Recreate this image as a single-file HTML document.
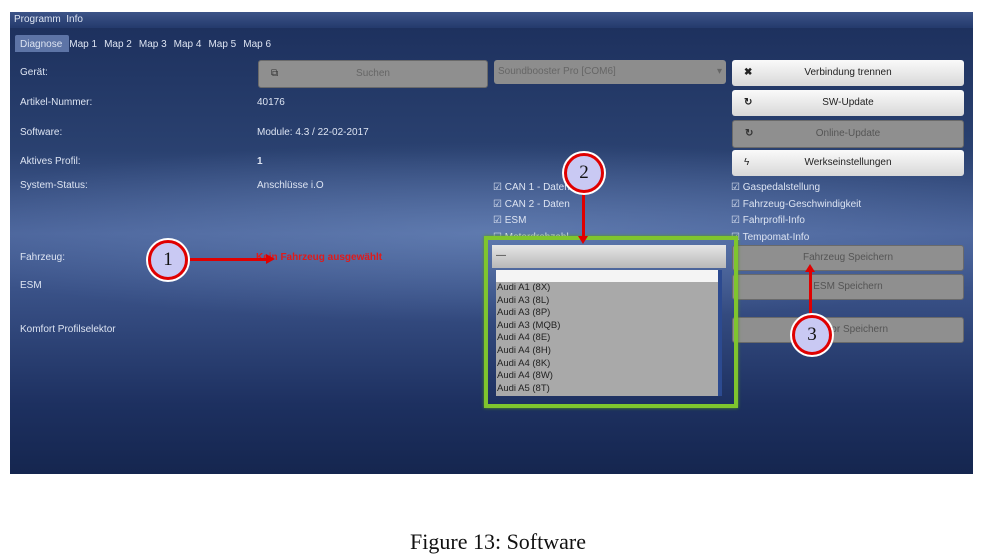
<!DOCTYPE html>
<html><head><style>
body{margin:0;width:990px;height:553px;background:#fff;position:relative;overflow:hidden;font-family:"Liberation Sans",sans-serif}
.scr{position:absolute;left:10px;top:12px;width:963px;height:462px;background:
radial-gradient(ellipse 600px 90px at 480px 220px,rgba(120,150,200,.45),rgba(0,0,0,0)),
linear-gradient(180deg,#1c2f5c 0%,#2a4170 30%,#4a639a 48%,#3a5288 60%,#1d3060 85%,#15264f 100%);}
.t{position:absolute;color:#dde4f2;font-size:10px;white-space:nowrap}
.tabs span{margin-right:7px}
.btn{position:absolute;border-radius:3px;font-size:10px;color:#222;text-align:center;line-height:26px;height:26px}
.w{background:linear-gradient(#fafafa,#d8d8d8)}
.g{background:#8f8f8f;color:#555;border:1px solid #6a6a6a}
.circ{position:absolute;width:34px;height:34px;border-radius:50%;background:#c9c9f3;border:3px solid #e00000;box-shadow:0 0 0 2px #fff;font-family:"Liberation Serif",serif;font-size:19px;text-align:center;line-height:34px;color:#111}
.ln{position:absolute;background:#e00000}
</style></head><body>
<div class="scr">
<div style="position:absolute;left:0;top:0;width:963px;height:16px;background:linear-gradient(#3d5488,#243a6c)"></div>
<div class="t" style="left:4px;top:2px">Programm&nbsp; Info</div>
<div style="position:absolute;left:5px;top:23px;width:54px;height:17px;background:#5d74a6;border-radius:2px 2px 0 0"></div>
<div class="t tabs" style="left:10px;top:27px;font-size:10px"><span>Diagnose</span><span>Map 1</span><span>Map 2</span><span>Map 3</span><span>Map 4</span><span>Map 5</span><span>Map 6</span></div>
<div class="t" style="left:10px;top:55px">Gerät:</div>
<div class="t" style="left:10px;top:85px">Artikel-Nummer:</div>
<div class="t" style="left:10px;top:115px">Software:</div>
<div class="t" style="left:10px;top:144px">Aktives Profil:</div>
<div class="t" style="left:10px;top:168px">System-Status:</div>
<div class="t" style="left:10px;top:240px">Fahrzeug:</div>
<div class="t" style="left:10px;top:268px">ESM</div>
<div class="t" style="left:10px;top:312px">Komfort Profilselektor</div>
<div class="t" style="left:247px;top:85px">40176</div>
<div class="t" style="left:247px;top:115px">Module: 4.3 / 22-02-2017</div>
<div class="t" style="left:247px;top:144px;font-weight:bold">1</div>
<div class="t" style="left:247px;top:168px">Anschlüsse i.O</div>
<div class="t" style="left:246px;top:240px;color:#e01a1a;font-weight:bold">Kein Fahrzeug ausgewählt</div>
<div class="t" style="left:483px;top:168px;line-height:16.5px">☑ CAN 1 - Daten<br>☑ CAN 2 - Daten<br>☑ ESM<br>☐ Motordrehzahl</div>
<div class="t" style="left:721px;top:168px;line-height:16.5px">☑ Gaspedalstellung<br>☑ Fahrzeug-Geschwindigkeit<br>☑ Fahrprofil-Info<br>☑ Tempomat-Info</div>
<div class="btn g" style="left:248px;top:48px;width:228px;color:#666">Suchen<span style="position:absolute;left:12px;color:#333">⧉</span></div>
<div class="btn" style="left:484px;top:48px;width:232px;height:24px;line-height:24px;background:#8d8d8d;color:#666;text-align:left;padding-left:4px;box-sizing:border-box">Soundbooster Pro [COM6]<span style="position:absolute;right:4px">▾</span></div>
<div class="btn w" style="left:722px;top:48px;width:232px">Verbindung trennen<span style="position:absolute;left:12px;font-weight:bold">✖</span></div>
<div class="btn w" style="left:722px;top:78px;width:232px">SW-Update<span style="position:absolute;left:12px;font-weight:bold">↻</span></div>
<div class="btn g" style="left:722px;top:108px;width:230px">Online-Update<span style="position:absolute;left:12px;color:#333;font-weight:bold">↻</span></div>
<div class="btn w" style="left:722px;top:138px;width:232px">Werkseinstellungen<span style="position:absolute;left:12px">ϟ</span></div>
<div class="btn g" style="left:722px;top:233px;width:230px;height:24px;line-height:24px">Fahrzeug Speichern</div>
<div class="btn g" style="left:722px;top:262px;width:230px;height:24px;line-height:24px">ESM Speichern</div>
<div class="btn g" style="left:722px;top:305px;width:230px;height:24px;line-height:24px">Komfor Speichern</div>
<div style="position:absolute;left:474px;top:224px;width:246px;height:164px;border:4px solid #7fc52e;box-shadow:0 0 3px #5a9a1a"></div>
<div style="position:absolute;left:482px;top:233px;width:234px;height:23px;background:linear-gradient(#e6e6e6,#b8b8b8);font-size:10px;color:#333;line-height:22px;padding-left:4px;box-sizing:border-box">—</div>
<div style="position:absolute;left:486px;top:258px;width:226px;height:126px;background:#a9a9a9;border-right:4px solid #2c4a90;box-sizing:border-box">
<div style="height:12px;background:#f4f4f4"></div>
<div style="font-size:9.5px;color:#222;line-height:12.6px;padding-left:1px">Audi A1 (8X)<br>Audi A3 (8L)<br>Audi A3 (8P)<br>Audi A3 (MQB)<br>Audi A4 (8E)<br>Audi A4 (8H)<br>Audi A4 (8K)<br>Audi A4 (8W)<br>Audi A5 (8T)</div></div>
</div>
<div class="ln" style="left:186px;top:258px;width:82px;height:3px"></div>
<div style="position:absolute;left:266px;top:254px;border-left:9px solid #e00000;border-top:5px solid transparent;border-bottom:5px solid transparent"></div>
<div class="ln" style="left:582px;top:190px;width:3px;height:48px"></div>
<div style="position:absolute;left:578px;top:236px;border-top:8px solid #e00000;border-left:5px solid transparent;border-right:5px solid transparent"></div>
<div class="ln" style="left:809px;top:270px;width:3px;height:48px"></div>
<div style="position:absolute;left:805px;top:264px;border-bottom:8px solid #e00000;border-left:5px solid transparent;border-right:5px solid transparent"></div>
<div class="circ" style="left:148px;top:240px">1</div>
<div class="circ" style="left:564px;top:153px">2</div>
<div class="circ" style="left:792px;top:315px">3</div>
<div style="position:absolute;left:0;width:996px;top:529px;text-align:center;font-family:'Liberation Serif',serif;font-size:22px;color:#111">Figure 13: Software</div>
</body></html>
